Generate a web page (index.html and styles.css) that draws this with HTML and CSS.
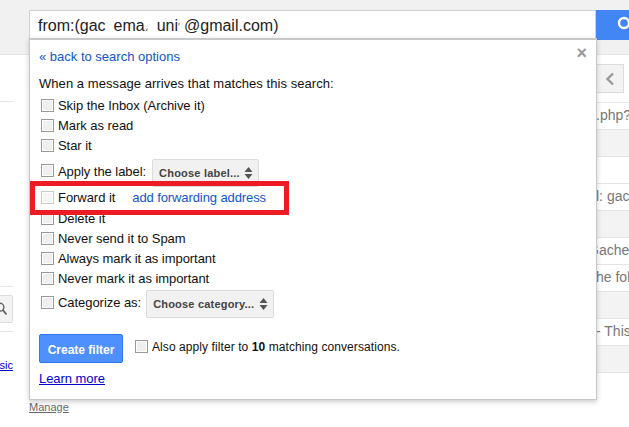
FILE: index.html
```html
<!DOCTYPE html>
<html lang="en">
<head>
<meta charset="utf-8">
<title>Create filter</title>
<link rel="stylesheet" href="styles.css">
</head>
<body>
<div class="page">
  <header class="top">
    <div class="search-input">from:(gac<span class="gap1"></span>ema<span class="cut">،</span><span class="gap2"></span>uni<span class="cut">'</span><span class="gap3"></span>@gmail.com)</div>
    <div class="search-btn">
      <svg class="search-glyph" width="33" height="30" viewBox="0 0 33 30"><circle cx="28" cy="13" r="5" fill="none" stroke="#fff" stroke-width="2.4"/></svg>
    </div>
  </header>
  <main class="content">
    <aside class="left">
      <div class="left-top"></div>
      <div class="left-tools">
        <div class="tool-btn">
          <svg width="13" height="16" viewBox="0 0 13 16"><circle cx="0" cy="6" r="4.2" fill="none" stroke="#666" stroke-width="1.6"/><path d="M3 9l4 5" stroke="#666" stroke-width="2"/></svg>
        </div>
      </div>
      <a class="left-link" href="#">sic</a>
    </aside>
    <section class="right">
      <div class="toolbar">
        <div class="nav-btn">
          <svg width="10" height="14" viewBox="0 0 10 14"><path d="M8 1.5L2.5 7 8 12.5" fill="none" stroke="#999" stroke-width="2.4"/></svg>
        </div>
      </div>
      <div class="mail"><span>.php?</span></div>
      <div class="mail read"></div>
      <div class="mail"></div>
      <div class="mail"><span>l: gac</span></div>
      <div class="mail read"></div>
      <div class="mail"><span class="t2">Gache</span></div>
      <div class="mail"><span>he foll</span></div>
      <div class="mail read"></div>
      <div class="mail"><span>- This</span></div>
      <div class="mail read"></div>
    </section>
  </main>

  <div class="dialog">
    <span class="close">×</span>
    <a class="back" href="#">« back to search options</a>
    <p class="lead">When a message arrives that matches this search:</p>
    <div class="opt"><span class="box"></span>Skip the Inbox (Archive it)</div>
    <div class="opt"><span class="box"></span>Mark as read</div>
    <div class="opt"><span class="box"></span>Star it</div>
    <div class="opt opt-select"><span class="box"></span>Apply the label:<span class="select select-label">Choose label...<svg class="arrows" width="9" height="12" viewBox="0 0 9 12"><path d="M4.5 0L8.5 5H.5zM.5 7h8l-4 5z" fill="#555"/></svg></span></div>
    <div class="opt opt-forward"><span class="box box-off"></span>Forward it<a class="add" href="#">add forwarding address</a></div>
    <div class="opt"><span class="box"></span>Delete it</div>
    <div class="opt"><span class="box"></span>Never send it to Spam</div>
    <div class="opt"><span class="box"></span>Always mark it as important</div>
    <div class="opt"><span class="box"></span>Never mark it as important</div>
    <div class="opt opt-cat"><span class="box"></span>Categorize as:<span class="select select-cat">Choose category...<svg class="arrows" width="9" height="12" viewBox="0 0 9 12"><path d="M4.5 0L8.5 5H.5zM.5 7h8l-4 5z" fill="#555"/></svg></span></div>
    <div class="actions">
      <span class="create">Create filter</span>
      <span class="also"><span class="box"></span>Also apply filter to <b>10</b> matching conversations.</span>
    </div>
    <a class="learn" href="#">Learn more</a>
  </div>
  <div class="highlight"></div>
  <a class="manage" href="#">Manage</a>
</div>
</body>
</html>
```
FILE: styles.css
```css
* { box-sizing: border-box; }
html, body { margin: 0; padding: 0; }
body { background: #fff; font-family: "Liberation Sans", Arial, sans-serif; font-size: 13px; color: #111; }
.page { position: relative; width: 629px; height: 427px; overflow: hidden; }

.top { height: 55px; background: #f1f1f1; border-bottom: 1px solid #e5e5e5; padding: 10px 0 0 29px; display: flex; align-items: flex-start; }
.search-input { width: 567px; height: 30px; background: #fff; border: 1px solid #d0d0d0; padding: 0 0 0 8px; font-size: 16px; line-height: 29px; color: #222; white-space: nowrap; }
.gap1 { display: inline-block; width: 8px; }
.gap2 { display: inline-block; width: 9px; }
.gap3 { display: inline-block; width: 4px; }
.cut { color: #555; font-size: 10px; }
.search-btn { width: 33px; height: 30px; background: #4285f4; }
.search-glyph { display: block; }

.content { display: flex; justify-content: space-between; }
.left { width: 13px; }
.left-top { height: 47px; border-bottom: 1px solid #e5e5e5; }
.left-tools { margin-top: 184px; height: 46px; border-top: 1px solid #e5e5e5; border-bottom: 1px solid #e5e5e5; padding-top: 8px; }
.tool-btn { height: 28px; width: 13px; background: #f3f3f3; border: 1px solid #dcdcdc; border-left: 0; border-radius: 0 2px 2px 0; display: flex; align-items: center; overflow: hidden; }
.left-link { display: block; margin-top: 27px; margin-left: -7px; font-size: 11px; line-height: 12px; color: #00c; text-decoration: underline; white-space: nowrap; width: 20px; direction: rtl; overflow: hidden; }

.right { width: 33px; }
.toolbar { height: 48px; padding-top: 9px; border-bottom: 1px solid #e5e5e5; }
.nav-btn { width: 28px; height: 29px; background: #f3f3f3; border: 1px solid #dcdcdc; display: flex; align-items: center; justify-content: center; }
.mail { height: 27px; background: #fff; border-bottom: 1px solid #e5e5e5; line-height: 25px; font-size: 14px; color: #777; white-space: nowrap; overflow: hidden; }
.mail.read { background: #f3f3f3; }
.t2 { margin-left: -8px; }

.dialog { position: absolute; left: 29px; top: 38px; width: 568px; height: 362px; background: #fff; border: 1px solid #c8c8c8; border-top-width: 2px; box-shadow: 0 2px 5px rgba(0,0,0,.2); padding: 9px 9px 0; line-height: 20px; color: #111; }
.close { position: absolute; right: 9px; top: 3px; font-size: 18px; font-weight: bold; line-height: 20px; color: #999; }
.back { display: block; height: 15px; line-height: 15px; color: #15c; text-decoration: none; }
.lead { margin: 12px 0 0; height: 15px; line-height: 15px; letter-spacing: .06px; white-space: nowrap; }
.opt { height: 20px; padding-left: 2px; display: flex; align-items: center; white-space: nowrap; letter-spacing: -.05px; }
.lead + .opt { margin-top: 5px; }
.box { flex: none; display: inline-block; width: 13px; height: 13px; margin: -2px 4px 0 0; background: #efefef; border: 1px solid #999; box-shadow: inset 0 0 0 1px #fff; }
.box-off { background: #f5f5f5; border-color: #ccc; }
.opt-select { height: 31px; }
.opt-forward { height: 22px; }
.add { margin-left: 17px; color: #15c; text-decoration: none; letter-spacing: -.1px; }
.opt-cat { height: 28px; }
.select { display: inline-flex; align-items: center; justify-content: space-between; height: 28px; margin: 2px 0 0 5px; padding: 0 5px 0 6px; background: #f1f1f1; border: 1px solid #dcdcdc; border-radius: 2px; font-size: 11px; letter-spacing: .2px; font-weight: bold; color: #444; }
.select-label { width: 107px; margin-left: 6px; }
.select-cat { width: 128px; }
.arrows { flex: none; }
.actions { display: flex; align-items: flex-start; margin-top: 17px; }
.create { display: block; width: 84px; height: 29px; line-height: 30px; text-align: center; background: #4d90fe; border: 1px solid #3079ed; border-radius: 2px; color: #fff; font-size: 12px; font-weight: bold; }
.also { display: flex; align-items: center; height: 20px; margin: 3px 0 0 12px; font-size: 12px; letter-spacing: .08px; white-space: pre; }
.also .box { margin-right: 4px; }
.learn { display: block; margin-top: 6px; color: #00c; text-decoration: underline; width: max-content; letter-spacing: -.05px; }

.highlight { position: absolute; left: 30px; top: 181px; width: 259px; height: 34px; border: 5px solid #ed1c24; }
.dialog, .highlight { z-index: 1; }
.manage { position: absolute; left: 29px; top: 401px; font-size: 11px; line-height: 13px; color: #666; text-decoration: underline; }
```
